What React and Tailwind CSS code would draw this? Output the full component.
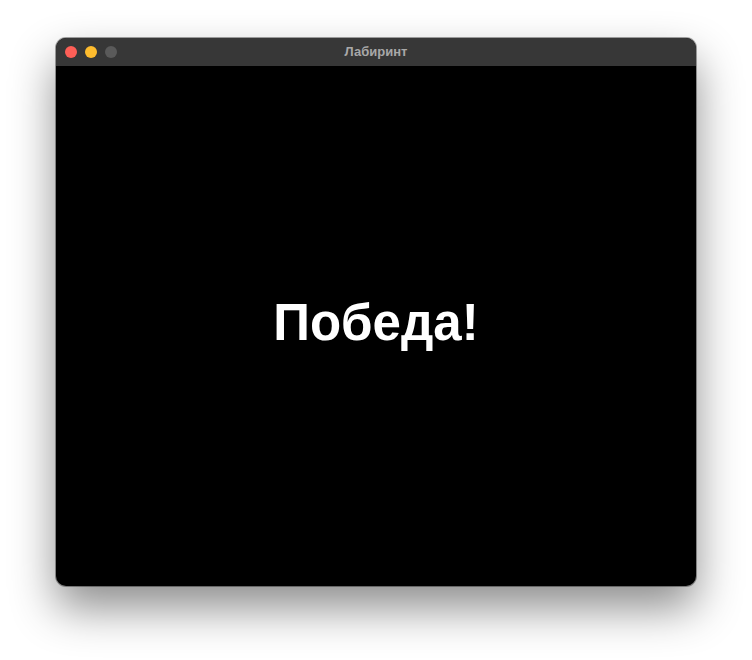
export default function App() {
  return (
    <div className="w-[752px] h-[660px] bg-white flex justify-center" style={{ fontFamily: '"Liberation Sans", Arial, sans-serif' }}>
      <div className="mt-[38px] w-[640px] h-[548px] rounded-[10px] overflow-hidden flex flex-col bg-black shadow-[0_22px_45px_rgba(0,0,0,0.45),0_0_0_1px_rgba(0,0,0,0.35)]">
        <div className="relative h-[28px] bg-[#373737] flex items-center justify-center shrink-0">
          <div className="absolute left-[9px] top-[8px] flex gap-[8px]">
            <div className="w-[12px] h-[12px] rounded-full bg-[#fe5f57]" />
            <div className="w-[12px] h-[12px] rounded-full bg-[#febc2e]" />
            <div className="w-[12px] h-[12px] rounded-full bg-[#5a5a5a]" />
          </div>
          <span className="text-[13px] font-bold text-[#a8a8a8]">Лабиринт</span>
        </div>
        <div className="flex-1 flex items-center justify-center">
          <span className="text-[51px] font-bold text-white leading-none -mt-[7px]">Победа!</span>
        </div>
      </div>
    </div>
  );
}
